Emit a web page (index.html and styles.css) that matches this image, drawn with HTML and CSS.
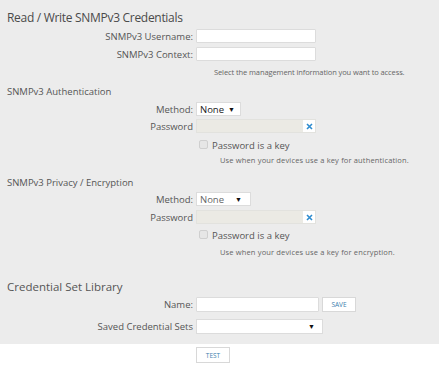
FILE: index.html
```html
<!DOCTYPE html>
<html lang="en">
<head>
  <meta charset="UTF-8" />
  <title>SNMPv3 Credentials</title>
  <link rel="stylesheet" href="styles.css">
</head>
<body>
  <div class="panel">
    <h2 class="title">Read / Write SNMPv3 Credentials</h2>

    <div class="row r-user">
      <label>SNMPv3 Username:</label>
      <input class="field" type="text">
    </div>
    <div class="row r-context">
      <label>SNMPv3 Context:</label>
      <input class="field" type="text">
    </div>
    <div class="hint h-context">Select the management information you want to access.</div>

    <h3 class="section s-auth">SNMPv3 Authentication</h3>
    <div class="row r-method">
      <label>Method:</label>
      <div class="select sel-auth"><span class="val dark">None</span><span class="arrow">&#9660;</span></div>
    </div>
    <div class="row r-pass">
      <label>Password</label>
      <div class="pass"><span class="pass-fill"></span><span class="clear"><svg width="7" height="7" viewBox="0 0 7 7"><path d="M1 1L6 6M6 1L1 6" stroke="#2e8ccf" stroke-width="1.6"/></svg></span></div>
    </div>
    <div class="row r-check">
      <span></span>
      <div class="check"><span class="box"></span>Password is a key</div>
    </div>
    <div class="hint h-auth">Use when your devices use a key for authentication.</div>

    <h3 class="section s-priv">SNMPv3 Privacy / Encryption</h3>
    <div class="row r-method2">
      <label>Method:</label>
      <div class="select sel-priv"><span class="val">None</span><span class="arrow">&#9660;</span></div>
    </div>
    <div class="row r-pass2">
      <label>Password</label>
      <div class="pass"><span class="pass-fill"></span><span class="clear"><svg width="7" height="7" viewBox="0 0 7 7"><path d="M1 1L6 6M6 1L1 6" stroke="#2e8ccf" stroke-width="1.6"/></svg></span></div>
    </div>
    <div class="row r-check2">
      <span></span>
      <div class="check"><span class="box"></span>Password is a key</div>
    </div>
    <div class="hint h-priv">Use when your devices use a key for encryption.</div>

    <h2 class="library">Credential Set Library</h2>
    <div class="row r-name">
      <label>Name:</label>
      <div class="inline">
        <input class="field name" type="text">
        <button class="btn">SAVE</button>
      </div>
    </div>
    <div class="row r-saved">
      <label>Saved Credential Sets</label>
      <div class="select sel-saved"><span class="val"></span><span class="arrow">&#9660;</span></div>
    </div>
  </div>

  <div class="footer">
    <button class="btn test">TEST</button>
  </div>
</body>
</html>
```

FILE: styles.css
```css
body {
  margin: 0;
  background: #fff;
  color: #444;
  font-family: "Open Sans", "Noto Sans", sans-serif;
}
.panel {
  background: #ececec;
  padding: 10px 0 10px 7px;
  height: 344px;
  box-sizing: border-box;
}
.title {
  margin: 0;
  font-size: 12px;
  font-weight: normal;
  line-height: 16px;
  letter-spacing: -0.3px;
  color: #4a4a4a;
}
.section {
  margin: 0;
  font-size: 9.5px;
  font-weight: normal;
  line-height: 14px;
  color: #555;
}
.library {
  margin: 21px 0 0;
  font-size: 11.5px;
  font-weight: normal;
  line-height: 16px;
  color: #555;
}
.row {
  display: grid;
  grid-template-columns: 186px auto;
  column-gap: 3px;
  align-items: center;
}
.row label {
  text-align: right;
  font-size: 9.5px;
  color: #555;
  white-space: nowrap;
}
.field {
  box-sizing: border-box;
  width: 120px;
  height: 14px;
  margin: 0;
  border: 1px solid #dcdcdc;
  background: #fff;
  border-radius: 1px;
  padding: 0;
}
.hint {
  font-size: 7.5px;
  line-height: 12px;
  color: #666;
}

.r-user { margin-top: 3px; }
.r-context { margin-top: 4px; }
.h-context { margin: 5px 0 0 207px; letter-spacing: -0.1px; }
.s-auth { margin-top: 7px; }
.r-method { margin-top: 3px; }
.r-pass { margin-top: 3px; }
.r-check { margin-top: 6px; }
.h-auth { margin: 1px 0 0 213px; letter-spacing: 0.15px; }
.s-priv { margin-top: 10px; }
.r-method2 { margin-top: 2px; }
.r-pass2 { margin-top: 4px; }
.r-check2 { margin-top: 5px; }
.h-priv { margin: 3px 0 0 213px; letter-spacing: 0.15px; }
.r-name { margin-top: 2px; }
.r-saved { margin-top: 7px; }

.select {
  box-sizing: border-box;
  height: 14px;
  background: #fff;
  border: 1px solid #dcdcdc;
  display: flex;
  align-items: center;
  justify-content: space-between;
  padding: 0 5px 0 3px;
  font-size: 9.5px;
  color: #666;
}
.select .dark { color: #222; }
.select .arrow {
  font-size: 7px;
  color: #111;
}
.sel-auth { width: 45px; }
.sel-priv { width: 55px; padding-right: 8px; }
.sel-saved { width: 127px; height: 15px; padding-right: 7px; }

.pass {
  box-sizing: border-box;
  width: 120px;
  height: 14px;
  display: flex;
  border: 1px solid #e2e2de;
}
.pass-fill {
  flex: 1;
  background: #ebeae4;
}
.clear {
  width: 12px;
  background: #fff;
  display: flex;
  align-items: center;
  justify-content: center;
}

.check {
  display: flex;
  align-items: center;
  font-size: 9.5px;
  line-height: 14px;
  color: #555;
  padding-left: 3px;
}
.check .box {
  box-sizing: border-box;
  width: 9px;
  height: 9px;
  border: 1px solid #cfcfcf;
  border-radius: 2px;
  background: #e6e6e6;
  margin: -4px 4px 0 0;
}

.inline {
  display: flex;
  gap: 3px;
}
.field.name { width: 123px; height: 15px; }
.btn {
  box-sizing: border-box;
  height: 15px;
  margin: 0;
  padding: 0;
  width: 34px;
  background: #fff;
  border: 1px solid #d8d8d8;
  font-family: "Open Sans", sans-serif;
  font-size: 6.5px;
  color: #3d7fae;
  line-height: 13px;
}

.footer {
  display: flex;
  padding: 3px 0 0 196px;
}
.btn.test {
  height: 16px;
}
```
